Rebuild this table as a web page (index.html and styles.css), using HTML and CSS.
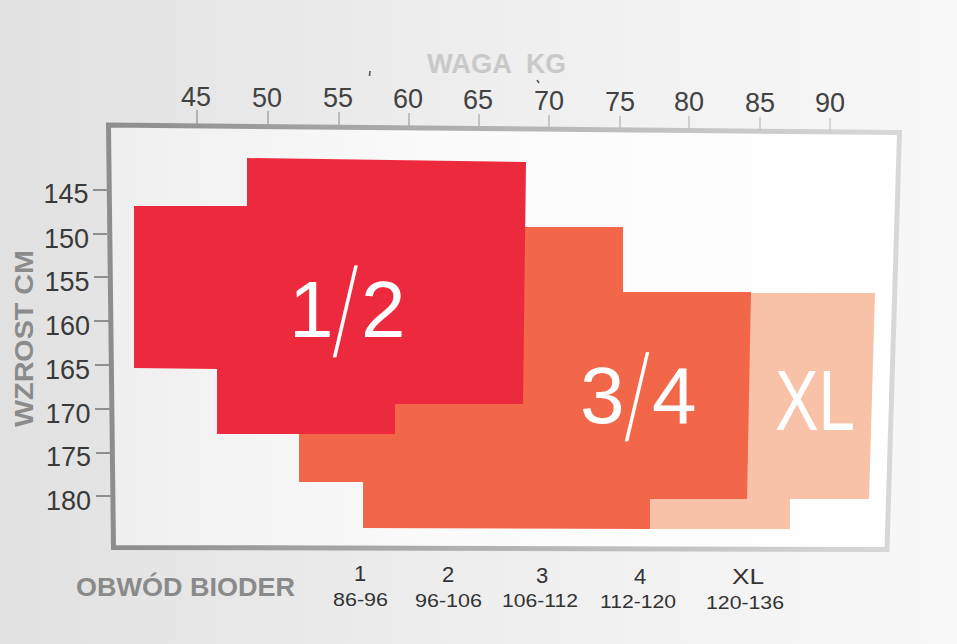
FILE: index.html
```html
<!DOCTYPE html>
<html lang="pl">
<head>
<meta charset="utf-8">
<title>Tabela rozmiarów</title>
<link rel="stylesheet" href="styles.css">
</head>
<body>
<main class="page">
<svg class="chart" width="957" height="644" viewBox="0 0 957 644" xmlns="http://www.w3.org/2000/svg">
  <defs>
    <linearGradient id="bg" x1="0" y1="0" x2="957" y2="0" gradientUnits="userSpaceOnUse">
      <stop offset="0" stop-color="#e1e1e1"/>
      <stop offset="0.45" stop-color="#ededed"/>
      <stop offset="1" stop-color="#f8f8f8"/>
    </linearGradient>
    <linearGradient id="inner" x1="110" y1="0" x2="890" y2="0" gradientUnits="userSpaceOnUse">
      <stop offset="0" stop-color="#efefef"/>
      <stop offset="0.4" stop-color="#fafafa"/>
      <stop offset="1" stop-color="#ffffff"/>
    </linearGradient>
    <linearGradient id="frame" x1="108" y1="0" x2="900" y2="0" gradientUnits="userSpaceOnUse">
      <stop offset="0" stop-color="#8d8d8d"/>
      <stop offset="0.5" stop-color="#b4b4b4"/>
      <stop offset="1" stop-color="#d8d8d8"/>
    </linearGradient>
    <linearGradient id="tick" x1="100" y1="0" x2="900" y2="0" gradientUnits="userSpaceOnUse">
      <stop offset="0" stop-color="#9a9a9a"/>
      <stop offset="1" stop-color="#d0d0d0"/>
    </linearGradient>
  </defs>

  <rect class="backdrop" x="0" y="0" width="957" height="644" fill="url(#bg)"/>

  <!-- frame -->
  <polygon class="plot" points="108.5,125 899.5,132.5 887,549.5 113.5,547.5" fill="url(#inner)" stroke="url(#frame)"/>

  <!-- size regions -->
  <polygon class="zone zone-xl" points="650,529 650,480 740,480 740,293 875,293 869,499 790,499 790,529"/>
  <polygon class="zone zone-34" points="299,435 299,390 510,390 510,227 623,227 623,292 751,292 747,499 650,499 650,529 363,528 363,482 299,482"/>
  <polygon class="zone zone-12" points="247,158 526,162 523,404 395,404 395,434 217,434 217,369 134,368 134,206 247,206"/>

  <!-- big labels -->
  <text class="big" x="289" y="337">1</text>
  <text class="big slash" transform="translate(333,356) skewX(-7.7) scale(0.36,1)">/</text>
  <text class="big" x="361" y="337">2</text>

  <text class="big" x="580" y="423">3</text>
  <text class="big slash slash-b" transform="translate(625,440) skewX(-7.9) scale(0.36,1)">/</text>
  <text class="big" x="652" y="423">4</text>

  <text class="big big-xl" x="775" y="430" textLength="80" lengthAdjust="spacingAndGlyphs">XL</text>

  <!-- top axis -->
  <text class="axis-title" x="427" y="73" textLength="85" lengthAdjust="spacingAndGlyphs">WAGA</text>
  <text class="axis-title" x="526" y="73" textLength="40" lengthAdjust="spacingAndGlyphs">KG</text>
  <line class="speck" x1="370" y1="71" x2="369.5" y2="76"/>
  <line class="speck" x1="537" y1="80" x2="539" y2="83"/>

  <g class="ticks-top">
    <line x1="197" y1="110" x2="197" y2="124"/>
    <line x1="268" y1="111" x2="268" y2="125"/>
    <line x1="339" y1="112" x2="339" y2="126"/>
    <line x1="409" y1="113" x2="409" y2="126"/>
    <line x1="479" y1="114" x2="479" y2="127"/>
    <line x1="549" y1="115" x2="549" y2="128"/>
    <line x1="620" y1="116" x2="620" y2="129"/>
    <line x1="689" y1="116" x2="689" y2="130"/>
    <line x1="760" y1="117" x2="760" y2="131"/>
    <line x1="830" y1="118" x2="830" y2="131"/>
  </g>
  <g class="nums-top">
    <text x="196" y="106">45</text>
    <text x="267" y="106.5">50</text>
    <text x="338" y="107">55</text>
    <text x="408" y="108">60</text>
    <text x="478" y="109">65</text>
    <text x="549" y="110">70</text>
    <text x="620" y="110.5">75</text>
    <text x="689" y="111">80</text>
    <text x="760" y="111.5">85</text>
    <text x="830" y="112">90</text>
  </g>

  <!-- left axis -->
  <text class="axis-side" transform="translate(33,427) rotate(-90)" textLength="177" lengthAdjust="spacingAndGlyphs">WZROST CM</text>
  <g class="ticks-left">
    <line x1="93" y1="190" x2="107" y2="190"/>
    <line x1="93" y1="234" x2="107" y2="234"/>
    <line x1="94" y1="277" x2="108" y2="277"/>
    <line x1="94" y1="321" x2="109" y2="321"/>
    <line x1="95" y1="365" x2="110" y2="365"/>
    <line x1="95" y1="409" x2="110" y2="409"/>
    <line x1="96" y1="453" x2="111" y2="453"/>
    <line x1="96" y1="496" x2="112" y2="496"/>
  </g>
  <g class="nums-left">
    <text x="88.5" y="203">145</text>
    <text x="89" y="247.5">150</text>
    <text x="89.5" y="291">155</text>
    <text x="90" y="335">160</text>
    <text x="90" y="379">165</text>
    <text x="90.5" y="422.5">170</text>
    <text x="91" y="466">175</text>
    <text x="91" y="509.5">180</text>
  </g>

  <!-- bottom legend -->
  <text class="axis-bottom" x="76" y="596" textLength="219" lengthAdjust="spacingAndGlyphs">OBWÓD BIODER</text>
  <g class="sizes">
    <text x="360" y="581">1</text>
    <text x="448" y="582">2</text>
    <text x="542" y="583">3</text>
    <text x="640" y="583.5">4</text>
    <text class="size-xl" x="732" y="584" textLength="32" lengthAdjust="spacingAndGlyphs">XL</text>
  </g>
  <g class="ranges">
    <text x="333" y="606" textLength="55" lengthAdjust="spacingAndGlyphs">86-96</text>
    <text x="415" y="606.5" textLength="67" lengthAdjust="spacingAndGlyphs">96-106</text>
    <text x="502" y="607" textLength="76" lengthAdjust="spacingAndGlyphs">106-112</text>
    <text x="600" y="608" textLength="76" lengthAdjust="spacingAndGlyphs">112-120</text>
    <text x="706" y="609" textLength="78" lengthAdjust="spacingAndGlyphs">120-136</text>
  </g>
</svg>
</main>
</body>
</html>
```

FILE: styles.css
```css
html, body {
  margin: 0;
  padding: 0;
  background: #ececec;
}

.page {
  display: block;
  width: 957px;
  height: 644px;
  overflow: hidden;
}

.chart {
  display: block;
  font-family: "Liberation Sans", Arial, sans-serif;
}

.plot {
  stroke-width: 5;
  stroke-linejoin: miter;
}

.zone-12 { fill: #ed2a3d; }
.zone-34 { fill: #f26749; }
.zone-xl { fill: #f7c2a8; }

.big {
  fill: #ffffff;
  font-size: 80px;
  font-weight: 400;
}

.slash {
  font-size: 125px;
}

.slash-b {
  font-size: 121px;
}

.big-xl {
  font-size: 85px;
}

.axis-title {
  fill: #c9c9c9;
  font-size: 27px;
  font-weight: 700;
}

.speck {
  stroke: #555555;
  stroke-width: 1.6;
}

.ticks-top line {
  stroke: url(#tick);
  stroke-width: 1.5;
}

.nums-top text {
  fill: #424242;
  font-size: 27px;
  text-anchor: middle;
}

.axis-side {
  fill: #8b8b8b;
  font-size: 25px;
  font-weight: 700;
}

.ticks-left line {
  stroke: #8f8f8f;
  stroke-width: 2;
}

.nums-left text {
  fill: #3a3a3a;
  font-size: 27px;
  text-anchor: end;
}

.axis-bottom {
  fill: #8a8a8a;
  font-size: 26px;
  font-weight: 700;
}

.sizes text {
  fill: #333333;
  font-size: 22px;
  text-anchor: middle;
}

.sizes text.size-xl {
  text-anchor: start;
}

.ranges text {
  fill: #333333;
  font-size: 19px;
}
```
